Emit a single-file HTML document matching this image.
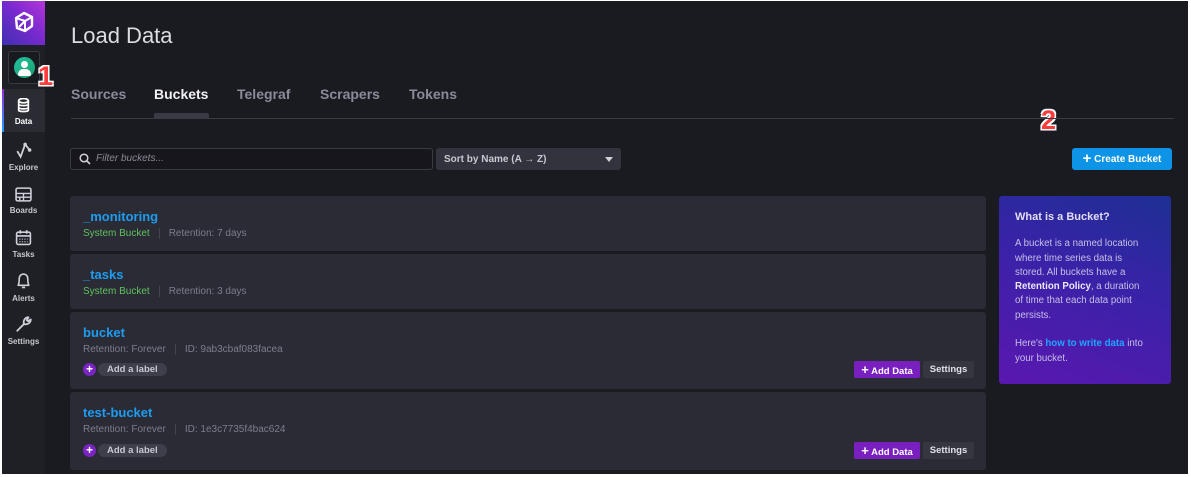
<!DOCTYPE html>
<html><head><meta charset="utf-8"><style>
*{box-sizing:border-box;margin:0;padding:0}
body{width:1191px;height:477px;background:#fff;font-family:"Liberation Sans",sans-serif;position:relative;overflow:hidden}
#app{position:absolute;left:2px;top:1px;width:1186px;height:473px;background:#1a1a21;overflow:hidden}
#side{position:absolute;left:0;top:0;width:43px;height:473px;background:#1f1f26}
#logo{position:absolute;left:0;top:0;width:43px;height:44px;background:linear-gradient(45deg,#3d2fb0,#7b2ad0 55%,#b435d8)}
.nav{position:absolute;left:0;width:43px;text-align:center;color:#c7c7d1;font-size:8px;font-weight:bold}
.nav svg{display:block;margin:0 auto 4px}
.abs{position:absolute}
h1{position:absolute;left:69px;top:22px;font-size:22px;font-weight:normal;color:#dcdce3}
.tab{position:absolute;top:85px;font-size:14px;font-weight:bold;color:#8a8a99}
.card{position:absolute;left:68px;width:916px;background:#2b2b35;border-radius:3px}
.name{position:absolute;left:13px;font-size:13px;font-weight:bold;color:#1d9cf0}
.meta{position:absolute;left:13px;font-size:10px;color:#7d7d8c;white-space:nowrap}
.meta .g{color:#5ec25e}
.sep{display:inline-block;width:1px;height:11px;background:#44444f;vertical-align:middle;margin:0 9px}
.lbl{position:absolute;left:13px;height:13px}
.lbl .p{position:absolute;left:0;top:0;width:13px;height:13px;border-radius:50%;background:#7a24c4;color:#fff;font-size:12px;line-height:12px;text-align:center;font-weight:bold}
.lbl .t{position:absolute;left:15px;top:0;height:13px;padding:0 9px;background:#3f3f4b;border-radius:7px;color:#c8c8d2;font-size:9.5px;line-height:13px;font-weight:bold;white-space:nowrap}
.btn{position:absolute;height:17px;border-radius:2px;font-size:9.5px;font-weight:bold;line-height:17px;color:#e0e0ea;text-align:center}
.num{position:absolute;font-size:27px;font-weight:bold;color:#ff3b3b;text-shadow:0 0 2px #fff,1.5px 1.5px 0 #fff,-1.5px -1.5px 0 #fff,1.5px -1.5px 0 #fff,-1.5px 1.5px 0 #fff}
</style></head><body>
<div id="app">
<div id="side">
 <div id="logo"><svg class="abs" style="left:11px;top:10px" width="22" height="22" viewBox="0 0 22 22"><polygon points="11,2 19,6 19,15 12,20 4,17 3,7" fill="none" stroke="#fff" stroke-width="2.4" stroke-linejoin="round"/><path d="M3,7 L12,10 L19,6 M12,10 L12,20 M12,10 L6,16" stroke="#fff" stroke-width="2" fill="none"/></svg></div>
 <div class="abs" style="left:6px;top:50px;width:32px;height:33px;border:1px solid #3a3a44;border-radius:3px;background:#191920"></div>
 <div class="abs" style="left:12px;top:56px;width:21px;height:21px;border-radius:50%;background:linear-gradient(135deg,#22c1a0,#1aa06e)"><div class="abs" style="left:7px;top:4px;width:7px;height:7px;border-radius:50%;background:#fff"></div><div class="abs" style="left:4px;top:12px;width:13px;height:7px;border-radius:6px 6px 2px 2px;background:#fff"></div></div>
 <div class="abs" style="left:0;top:88px;width:43px;height:43px;background:#2b2b34"></div>
 <div class="abs" style="left:0;top:88px;width:2px;height:43px;background:linear-gradient(#9b2ad8,#1fa0ff)"></div>
 <div class="nav" style="top:97px"><svg width="13" height="15" viewBox="0 0 12 14"><ellipse cx="6" cy="2.5" rx="4.5" ry="2" fill="none" stroke="#fff" stroke-width="1.6"/><path d="M1.5,2.5V11.5C1.5,13 10.5,13 10.5,11.5V2.5M1.5,6C1.5,7.5 10.5,7.5 10.5,6M1.5,9C1.5,10.5 10.5,10.5 10.5,9" fill="none" stroke="#fff" stroke-width="1.6"/></svg><span style="color:#fff">Data</span></div>
 <div class="nav" style="top:140px"><svg width="18" height="18" viewBox="0 0 16 16"><path d="M2,9 L5,14 L9,3 L13,8" fill="none" stroke="#d0d0da" stroke-width="1.6"/><circle cx="9" cy="3" r="1.6" fill="#d0d0da"/><circle cx="13" cy="8" r="1.6" fill="#d0d0da"/></svg>Explore</div>
 <div class="nav" style="top:186px"><svg width="17" height="15" viewBox="0 0 16 14"><rect x="1" y="1" width="14" height="12" rx="1.5" fill="none" stroke="#d0d0da" stroke-width="1.5"/><path d="M1,6H15M8,6V13M1,9.5H15M4.5,9.5V13" stroke="#d0d0da" stroke-width="1.3"/></svg>Boards</div>
 <div class="nav" style="top:228px"><svg width="17" height="17" viewBox="0 0 16 15"><rect x="1.5" y="2.5" width="13" height="11.5" rx="1.5" fill="none" stroke="#d0d0da" stroke-width="1.5"/><path d="M1.5,6H14.5M5,0.5V4M11,0.5V4" stroke="#d0d0da" stroke-width="1.5"/><path d="M4,9H12M4,11.5H12" stroke="#d0d0da" stroke-dasharray="1.2 1.2"/></svg>Tasks</div>
 <div class="nav" style="top:271px"><svg width="15" height="18" viewBox="0 0 14 16"><path d="M2,12 C3,10 3,8 3,6 C3,3 5,1.5 7,1.5 C9,1.5 11,3 11,6 C11,8 11,10 12,12 Z" fill="none" stroke="#d0d0da" stroke-width="1.5" stroke-linejoin="round"/><path d="M5.5,14H8.5" stroke="#d0d0da" stroke-width="1.6"/></svg>Alerts</div>
 <div class="nav" style="top:314px"><svg width="18" height="18" viewBox="0 0 16 16"><path d="M2,14 L8,8 M8,8 C7,5 9,2 12,2 L10.5,4.5 L11.5,5.5 L14,4 C14,7 11,9 8,8" fill="none" stroke="#d0d0da" stroke-width="1.6" stroke-linejoin="round" stroke-linecap="round"/></svg>Settings</div>
</div>
<div class="num" style="left:36px;top:60px">1</div>
<div class="num" style="left:1039px;top:104px">2</div>

<h1>Load Data</h1>
<div class="tab" style="left:69px">Sources</div>
<div class="tab" style="left:152px;color:#f0f0f5">Buckets</div>
<div class="tab" style="left:235px">Telegraf</div>
<div class="tab" style="left:318px">Scrapers</div>
<div class="tab" style="left:407px">Tokens</div>
<div class="abs" style="left:69px;top:117px;width:1103px;height:1px;background:#3a3a45"></div>
<div class="abs" style="left:152px;top:112px;width:55px;height:6px;background:#3a3a45;border-radius:2px 2px 0 0"></div>

<div class="abs" style="left:68px;top:147px;width:363px;height:22px;border:1px solid #3a3a45;border-radius:3px;background:#16161c"></div>
<svg class="abs" style="left:77px;top:152px" width="12" height="12" viewBox="0 0 12 12"><circle cx="5" cy="5" r="3.8" fill="none" stroke="#d0d0da" stroke-width="1.5"/><path d="M8,8L11,11" stroke="#d0d0da" stroke-width="1.6"/></svg>
<div class="abs" style="left:94px;top:152px;font-size:10px;font-style:italic;color:#8a8a98">Filter buckets...</div>
<div class="abs" style="left:434px;top:147px;width:185px;height:22px;border-radius:3px;background:#33333e"></div>
<div class="abs" style="left:442px;top:153px;font-size:10px;font-weight:bold;color:#c8c8d3">Sort by Name (A → Z)</div>
<div class="abs" style="left:603px;top:156px;width:0;height:0;border-left:4px solid transparent;border-right:4px solid transparent;border-top:5px solid #d0d0da"></div>

<div class="btn" style="left:1070px;top:147px;width:100px;height:22px;line-height:22px;background:#0e94e6;color:#fff;font-size:10px;border-radius:3px"><span style="font-size:15px;vertical-align:-1px">+</span> Create Bucket</div>

<div class="card" style="top:195px;height:55px"><div class="name" style="top:13px">_monitoring</div><div class="meta" style="top:32px"><span class="g">System Bucket</span><span class="sep"></span>Retention: 7 days</div></div>
<div class="card" style="top:253px;height:55px"><div class="name" style="top:13px">_tasks</div><div class="meta" style="top:32px"><span class="g">System Bucket</span><span class="sep"></span>Retention: 3 days</div></div>
<div class="card" style="top:311px;height:77px"><div class="name" style="top:13px">bucket</div><div class="meta" style="top:32px">Retention: Forever<span class="sep"></span>ID: 9ab3cbaf083facea</div><div class="lbl" style="top:51px"><div class="p">+</div><div class="t">Add a label</div></div>
 <div class="btn" style="left:784px;top:49px;width:66px;background:#7a1fbf;color:#fff"><span style="font-size:13px">+</span> Add Data</div><div class="btn" style="left:853px;top:49px;width:51px;background:#363641">Settings</div></div>
<div class="card" style="top:391px;height:78px"><div class="name" style="top:13px">test-bucket</div><div class="meta" style="top:32px">Retention: Forever<span class="sep"></span>ID: 1e3c7735f4bac624</div><div class="lbl" style="top:52px"><div class="p">+</div><div class="t">Add a label</div></div>
 <div class="btn" style="left:784px;top:50px;width:66px;background:#7a1fbf;color:#fff"><span style="font-size:13px">+</span> Add Data</div><div class="btn" style="left:853px;top:50px;width:51px;background:#363641">Settings</div></div>

<div class="abs" style="left:997px;top:195px;width:172px;height:188px;border-radius:3px;background:linear-gradient(20deg,#5a17b0 0%,#3a22a8 55%,#1d2f94 100%);padding:14px 22px 14px 16px;color:#c6bfe6;font-size:9.7px;line-height:14.3px">
 <div style="font-size:11px;font-weight:bold;color:#e2ddf5;margin-bottom:13px">What is a Bucket?</div>
 A bucket is a named location where time series data is stored. All buckets have a <b style="color:#ece8fa">Retention Policy</b>, a duration of time that each data point persists.<br><br>Here's <b style="color:#1fa6ff">how to write data</b> into your bucket.
</div>
</div>
</body></html>
